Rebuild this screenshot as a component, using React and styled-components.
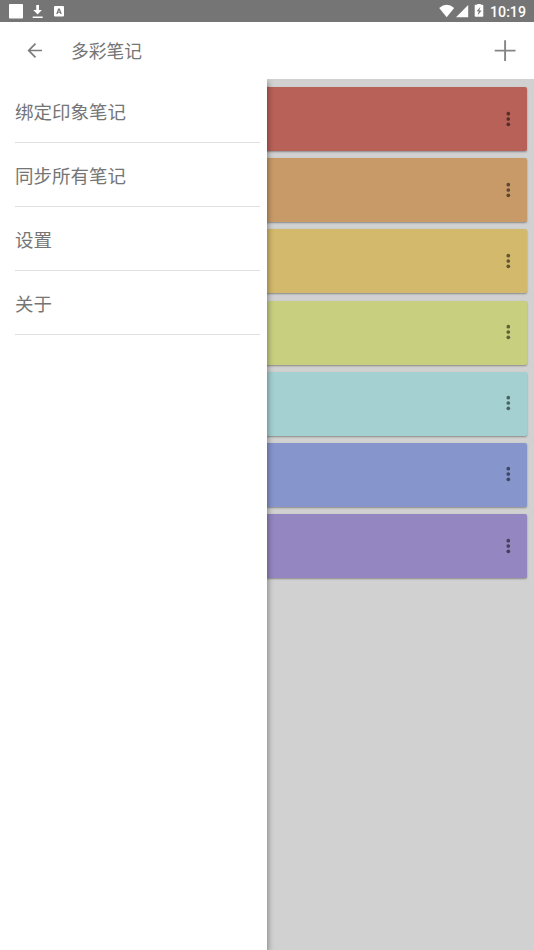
import React from 'react';
import styled, { createGlobalStyle } from 'styled-components';

const menus = ['绑定印象笔记', '同步所有笔记', '设置', '关于'];

const notes = [
  { color: '#b86158', dot: '#562d29' },
  { color: '#c89a68', dot: '#5e4831' },
  { color: '#d3b96c', dot: '#635732' },
  { color: '#c8cf7f', dot: '#5e613b' },
  { color: '#a4d0d1', dot: '#4d6262' },
  { color: '#8695cc', dot: '#3f4660' },
  { color: '#9486c0', dot: '#453f5a' },
];

const StatusIcons = () => (
  <svg width="80" height="22" viewBox="0 0 80 22" fill="#fff">
    <rect x="9" y="4" width="14" height="14.6" rx="0.8" />
    <path d="M36.2 5h2.8v5h2.9l-4.3 4.4-4.3-4.4h2.9zM32.7 16.4h10v1.5h-10z" />
    <path
      fillRule="evenodd"
      d="M55 6h8a1 1 0 0 1 1 1v8.5a1 1 0 0 1-1 1h-8a1 1 0 0 1-1-1V7a1 1 0 0 1 1-1zM58.2 8.5L56.2 14h1.4l.4-1.2h2l.4 1.2h1.4l-2-5.500zM59 9.900l.6 1.800h-1.200z"
    />
  </svg>
);

const SystemIcons = () => (
  <svg width="48" height="22" viewBox="0 0 48 22" fill="#fff">
    <path d="M0.2 8.1Q7.7 1.600 15.200 8.100L7.700 17.200z" />
    <path d="M29.2 5v12.2H17z" />
    <path
      fillRule="evenodd"
      d="M38.200 4.800V4h3.600v.8h1.800q.7 0 .7.700v10.500q0 .7-.7.700h-7.200q-.7 0-.7-.7V5.500q0-.7.7-.700zM41.500 6.800l-3.900 4.400h2.200l-1.200 4.200 4-5h-2.400z"
    />
  </svg>
);

const MoreIcon = ({ color }) => (
  <svg width="6" height="18" viewBox="0 0 6 18" fill={color}>
    <circle cx="3.3" cy="3.7" r="1.85" />
    <circle cx="3.3" cy="9" r="1.85" />
    <circle cx="3.3" cy="14.3" r="1.85" />
  </svg>
);

const App = () => {
  return (
    <Screen>
      <GlobalStyle />
      <StatusBar>
        <StatusIcons />
        <SystemGroup>
          <SystemIcons />
          <Clock>10:19</Clock>
        </SystemGroup>
      </StatusBar>
      <Toolbar>
        <IconButton>
          <svg width="16" height="16" viewBox="0 0 16 16" fill="none" stroke="#7b7b7b" strokeWidth="1.7">
            <path d="M15 7.5H2M8.5 .7L1.7 7.5l6.800 6.800" />
          </svg>
        </IconButton>
        <Title>多彩笔记</Title>
        <IconButton>
          <svg width="22" height="22" viewBox="0 0 22 22" fill="none" stroke="#858585" strokeWidth="1.9">
            <path d="M11.1 .2v20.800M.7 10.600h20.800" />
          </svg>
        </IconButton>
      </Toolbar>
      <Content>
        <NoteList>
          {notes.map((note) => (
            <NoteCard key={note.color} $color={note.color}>
              <MoreIcon color={note.dot} />
            </NoteCard>
          ))}
        </NoteList>
        {/* 侧边菜单盖在笔记列表上 */}
        <Drawer>
          {menus.map((menu) => (
            <MenuItem key={menu}>{menu}</MenuItem>
          ))}
        </Drawer>
      </Content>
    </Screen>
  );
};

export default App;

const GlobalStyle = createGlobalStyle`
  * {
    box-sizing: border-box;
  }
  body {
    margin: 0;
    font-family: Roboto, 'Noto Sans CJK SC', sans-serif;
  }
  svg {
    display: block;
    flex: none;
  }
`;

const Screen = styled.div`
  display: flex;
  flex-direction: column;
  width: 534px;
  height: 950px;
  overflow: hidden;
  background: #fff;
`;

const StatusBar = styled.div`
  display: flex;
  justify-content: space-between;
  flex: none;
  height: 22px;
  background: #757575;
`;

const SystemGroup = styled.div`
  display: flex;
  padding-right: 8px;
`;

const Clock = styled.span`
  margin-left: 3px;
  color: #fff;
  font-size: 14.2px;
  font-weight: 500;
  line-height: 24px;
`;

const Toolbar = styled.header`
  display: flex;
  align-items: center;
  flex: none;
  height: 57px;
  padding: 0 18px 0 27px;
  background: #fff;
`;

const IconButton = styled.button`
  padding: 0;
  border: none;
  background: none;
`;

const Title = styled.h1`
  flex: 1;
  margin: 0 0 0 28px;
  padding-top: 2px;
  color: #757575;
  font-size: 17.8px;
  font-weight: 400;
  line-height: 26px;
`;

const Content = styled.main`
  position: relative;
  flex: 1;
  overflow: hidden;
  background: #d1d1d1;
`;

const NoteList = styled.div`
  display: flex;
  flex-direction: column;
  gap: 7.2px;
  padding: 8px 7px;
`;

const NoteCard = styled.div`
  display: flex;
  align-items: center;
  justify-content: flex-end;
  height: 64px;
  padding: 0 16px 1px 0;
  border-radius: 2px;
  background: ${(props) => props.$color};
  box-shadow: 0 1px 2px rgba(0, 0, 0, 0.35);
`;

const Drawer = styled.nav`
  position: absolute;
  top: 0;
  bottom: 0;
  left: 0;
  width: 267px;
  padding: 0 7px 0 15px;
  background: #fff;
  box-shadow: 1px 3px 6px rgba(0, 0, 0, 0.38);
`;

const MenuItem = styled.div`
  height: 64px;
  padding-top: 2px;
  border-bottom: 1px solid #e0e0e0;
  color: #757575;
  font-size: 18.5px;
  line-height: 64px;
`;
